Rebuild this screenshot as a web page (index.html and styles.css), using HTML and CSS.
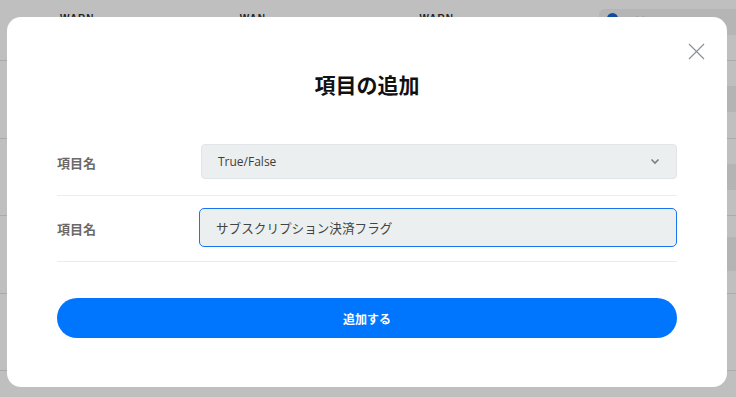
FILE: index.html
```html
<!doctype html>
<html lang="ja">
<head>
  <meta charset="utf-8">
  <title>項目の追加</title>
  <link rel="stylesheet" href="styles.css">
</head>
<body>
  <div class="page">
    <div class="list-head">
      <span class="head-cell">WARN</span>
      <span class="head-cell">WAN</span>
      <span class="head-cell">WARN</span>
      <span class="head-pill"><i class="pill-dot"></i>Add</span>
    </div>
    <div class="list-row"><span class="row-tag"></span></div>
    <div class="list-row"><span class="row-tag"></span></div>
    <div class="list-row"><span class="row-tag row-tag-tall"></span></div>
    <div class="list-row"></div>
  </div>

  <div class="overlay">
    <div class="modal">
      <button class="modal-close" aria-label="閉じる">
        <svg width="17" height="17" viewBox="0 0 17 17"><path d="M1 1L16 16M16 1L1 16" stroke="#8a9299" stroke-width="1.2" fill="none"/></svg>
      </button>
      <h2 class="modal-title">項目の追加</h2>
      <div class="form-row">
        <label class="form-label">項目名</label>
        <div class="form-select">
          <span>True/False</span>
          <svg width="10" height="7" viewBox="0 0 10 7"><path d="M1.5 1.5L5 5L8.5 1.5" stroke="#7a7f84" stroke-width="1.6" fill="none"/></svg>
        </div>
      </div>
      <div class="form-row">
        <label class="form-label">項目名</label>
        <div class="form-input">サブスクリプション決済フラグ</div>
      </div>
      <button class="submit-button">追加する</button>
    </div>
  </div>
</body>
</html>
```
FILE: styles.css
```css
body {
  margin: 0;
  font-family: "Noto Sans CJK JP", "Noto Sans", sans-serif;
  background: #fff;
  color: #222;
}
body * {
  box-sizing: border-box;
}
.page {
  width: 736px;
  height: 397px;
  overflow: hidden;
}
.list-head {
  height: 61px;
  display: flex;
  align-items: flex-start;
  padding: 13px 0 0 60px;
  border-bottom: 1px solid #e2e3e2;
}
.head-cell {
  width: 180px;
  font: 700 10px/12px "Liberation Sans", sans-serif;
  letter-spacing: 1px;
  color: #333;
}
.head-pill {
  margin-left: auto;
  margin-top: -4px;
  width: 137px;
  height: 26px;
  display: flex;
  align-items: flex-start;
  gap: 8px;
  padding: 4px 0 0 8px;
  background: #f1f2f1;
  border-radius: 6px 0 0 6px;
  font-size: 10px;
}
.pill-dot {
  width: 11px;
  height: 11px;
  border-radius: 50%;
  background: #1566d6;
}
.list-row {
  height: 77.5px;
  display: flex;
  align-items: center;
  justify-content: flex-end;
  border-bottom: 1px solid #e2e3e2;
}
.row-tag {
  width: 40px;
  height: 26px;
  background: #eff0ef;
}
.row-tag-tall {
  height: 34px;
}
.overlay {
  position: fixed;
  inset: 0;
  background: rgba(0, 0, 0, .25);
  padding: 17px 0 0 7px;
}
.modal {
  position: relative;
  width: 720px;
  height: 370px;
  background: #fff;
  border-radius: 14px;
  padding: 53px 50px 0;
}
.modal-close {
  position: absolute;
  top: 26px;
  right: 22px;
  padding: 0;
  border: 0;
  background: none;
  display: flex;
}
.modal-title {
  margin: 0 0 31px;
  text-align: center;
  font-size: 21px;
  line-height: 29px;
  font-weight: 700;
  color: #111;
}
.form-row {
  height: 66px;
  display: flex;
  align-items: center;
  border-bottom: 1px solid #ececec;
}
.form-label {
  width: 144px;
  flex: none;
  font-size: 13px;
  font-weight: 700;
  color: #6a6a6a;
}
.form-select {
  flex: 1;
  height: 35px;
  display: flex;
  align-items: center;
  justify-content: space-between;
  padding: 0 16px;
  margin-top: -2px;
  background: #eceff0;
  border: 1px solid #e2e5e7;
  border-radius: 4px;
  font: 12px "Open Sans", sans-serif;
  color: #3c3c3c;
}
.form-input {
  flex: 1;
  height: 39px;
  margin-left: -2px;
  margin-top: -2px;
  display: flex;
  align-items: center;
  padding: 0 16px;
  background: #eceff0;
  border: 1px solid #1a73f0;
  border-radius: 5px;
  font-size: 12.6px;
  color: #444;
}
.submit-button {
  display: block;
  width: 100%;
  height: 40px;
  margin-top: 36px;
  border: 0;
  border-radius: 20px;
  background: #0076ff;
  color: #fff;
  font-family: "Noto Sans CJK JP", sans-serif;
  font-size: 12px;
  font-weight: 700;
}
```
